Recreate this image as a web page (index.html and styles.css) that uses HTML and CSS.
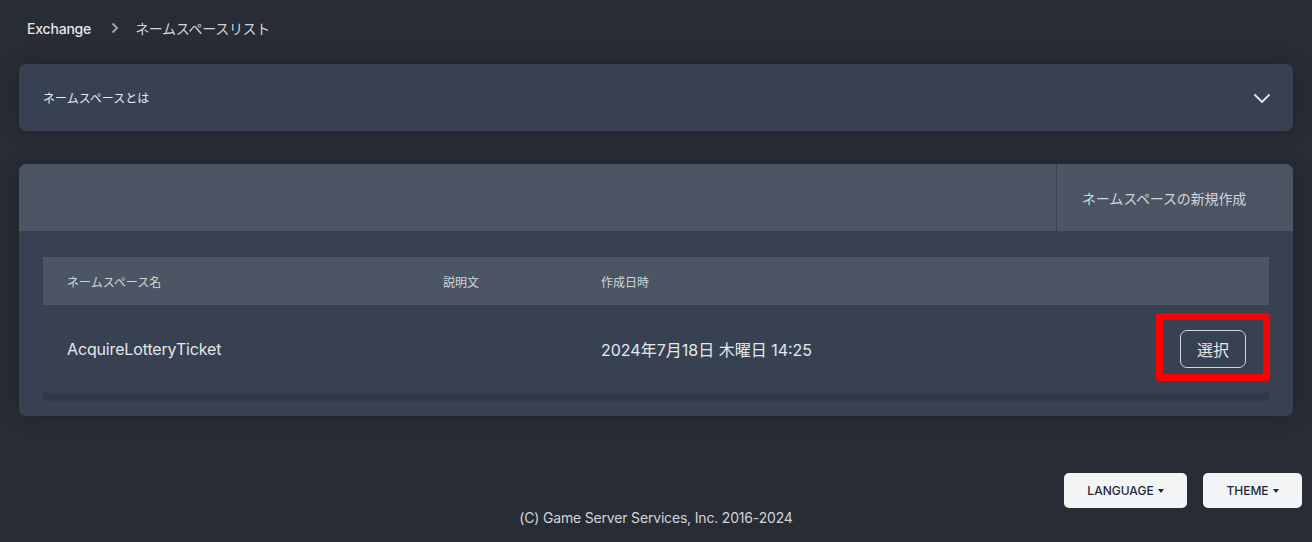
FILE: index.html
```html
<!DOCTYPE html>
<html lang="ja">
<head>
<meta charset="utf-8">
<title>ネームスペースリスト</title>
<link rel="stylesheet" href="styles.css">
</head>
<body>
<main class="page">
  <nav class="crumbs">
    <span class="crumb-root">Exchange</span>
    <svg class="crumb-sep" width="8" height="12" viewBox="0 0 8 12"><path d="M1.5 1.5 L6 6 L1.5 10.5" fill="none" stroke="#9ca3af" stroke-width="2"/></svg>
    <span class="crumb-current">ネームスペースリスト</span>
  </nav>

  <section class="card accordion">
    <span class="accordion-title">ネームスペースとは</span>
    <svg class="chev" width="18" height="11" viewBox="0 0 18 11"><path d="M1.5 1.5 L9 9 L16.5 1.5" fill="none" stroke="#e5e7eb" stroke-width="1.8"/></svg>
  </section>

  <section class="card list">
    <div class="list-head">
      <div class="list-head-fill"></div>
      <button class="create-btn">ネームスペースの新規作成</button>
    </div>
    <div class="list-body">
      <div class="table">
        <div class="trow thead">
          <div class="c1">ネームスペース名</div>
          <div class="c2">説明文</div>
          <div class="c3">作成日時</div>
          <div class="c4"></div>
        </div>
        <div class="trow tbody">
          <div class="c1">AcquireLotteryTicket</div>
          <div class="c2"></div>
          <div class="c3">2024年7月18日 木曜日 14:25</div>
          <div class="c4">
            <span class="hl-wrap">
              <button class="select-btn">選択</button>
              <span class="highlight"></span>
            </span>
          </div>
        </div>
        <div class="tscroll"></div>
      </div>
    </div>
  </section>

  <footer class="footer">
    <div class="footer-btns">
      <button class="pill">LANGUAGE<span class="caret"></span></button>
      <button class="pill">THEME<span class="caret"></span></button>
    </div>
    <p class="copy">(C) Game Server Services, Inc. 2016-2024</p>
  </footer>
</main>
</body>
</html>
```
FILE: styles.css
```css
* { box-sizing: border-box; }
html, body { margin: 0; padding: 0; }
body {
  background: #282c35;
  font-family: Inter, "Noto Sans CJK JP", sans-serif;
  color: #e5e7eb;
  width: 1312px;
  height: 542px;
  overflow: hidden;
}
.page {
  padding: 0 19px;
}
.crumbs {
  height: 64px;
  display: flex;
  align-items: center;
  padding: 0 0 8px 8px;
  font-size: 14px;
}
.crumb-root { color: #e5e7eb; font-weight: 500; letter-spacing: -0.2px; }
.crumb-sep { margin: 0 16px 0 20px; }
.crumb-current { color: #d1d5db; letter-spacing: -0.3px; }

.card {
  background: #374151;
  border-radius: 7px;
  box-shadow: 0 0 18px rgba(0,0,0,0.22);
}
.accordion {
  height: 67px;
  display: flex;
  align-items: center;
  justify-content: space-between;
  padding: 0 22px 0 24px;
}
.accordion-title { font-size: 12px; color: #e5e7eb; }
.chev { margin-top: 2px; }

.list {
  margin-top: 33px;
  height: 252px;
  overflow: hidden;
}
.list-head {
  height: 67px;
  background: #4b5563;
  display: flex;
}
.list-head-fill { flex: 1; }
.create-btn {
  width: 237px;
  border: 0;
  border-left: 1px solid #3a4452;
  background: transparent;
  color: #d1d5db;
  font-family: inherit;
  font-size: 14px;
  letter-spacing: -0.15px;
  text-align: left;
  padding: 0 0 0 25px;
}
.list-body {
  padding: 26px 24px 15px;
}
.trow {
  display: flex;
  align-items: center;
}
.c1 { width: 376px; padding-left: 24px; }
.c2 { width: 158px; padding-left: 24px; }
.c3 { width: 400px; padding-left: 24px; }
.c4 { flex: 1; display: flex; justify-content: flex-end; padding-right: 23px; }
.thead {
  height: 48px;
  background: #4b5563;
  font-size: 12px;
  color: #d1d5db;
}
.tbody {
  height: 88px;
  font-size: 16px;
  color: #e5e7eb;
}
.tbody .c1 { letter-spacing: -0.15px; }
.tscroll {
  height: 8px;
  background: #313a47;
}
.hl-wrap { position: relative; display: inline-block; }
.select-btn {
  display: block;
  width: 66px;
  height: 38px;
  background: transparent;
  border: 1px solid #d1d5db;
  border-radius: 7px;
  color: #e5e7eb;
  font-family: inherit;
  font-size: 16px;
}
.highlight {
  position: absolute;
  left: -24px;
  top: -17px;
  width: 114px;
  height: 68px;
  border: 7px solid #ff0000;
  border-radius: 3px;
  pointer-events: none;
}

.footer {
  margin: 57px -9px 0 0;
}
.footer-btns {
  display: flex;
  justify-content: flex-end;
  gap: 16px;
}
.pill {
  height: 35px;
  background: #f3f4f6;
  border: 0;
  border-radius: 5px;
  color: #1f2937;
  font-family: Inter, sans-serif;
  font-size: 12px;
  font-weight: 500;
  display: inline-flex;
  align-items: center;
  justify-content: center;
}
.pill:first-child { width: 123px; }
.pill:last-child { width: 99px; }
.caret {
  display: inline-block;
  margin-left: 4px;
  width: 0; height: 0;
  border-left: 3.5px solid transparent;
  border-right: 3.5px solid transparent;
  border-top: 4px solid #1f2937;
}
.copy {
  margin: 0 9px 0 0;
  text-align: center;
  font-size: 14px;
  line-height: 20px;
  letter-spacing: -0.18px;
  color: #d1d5db;
}
```
